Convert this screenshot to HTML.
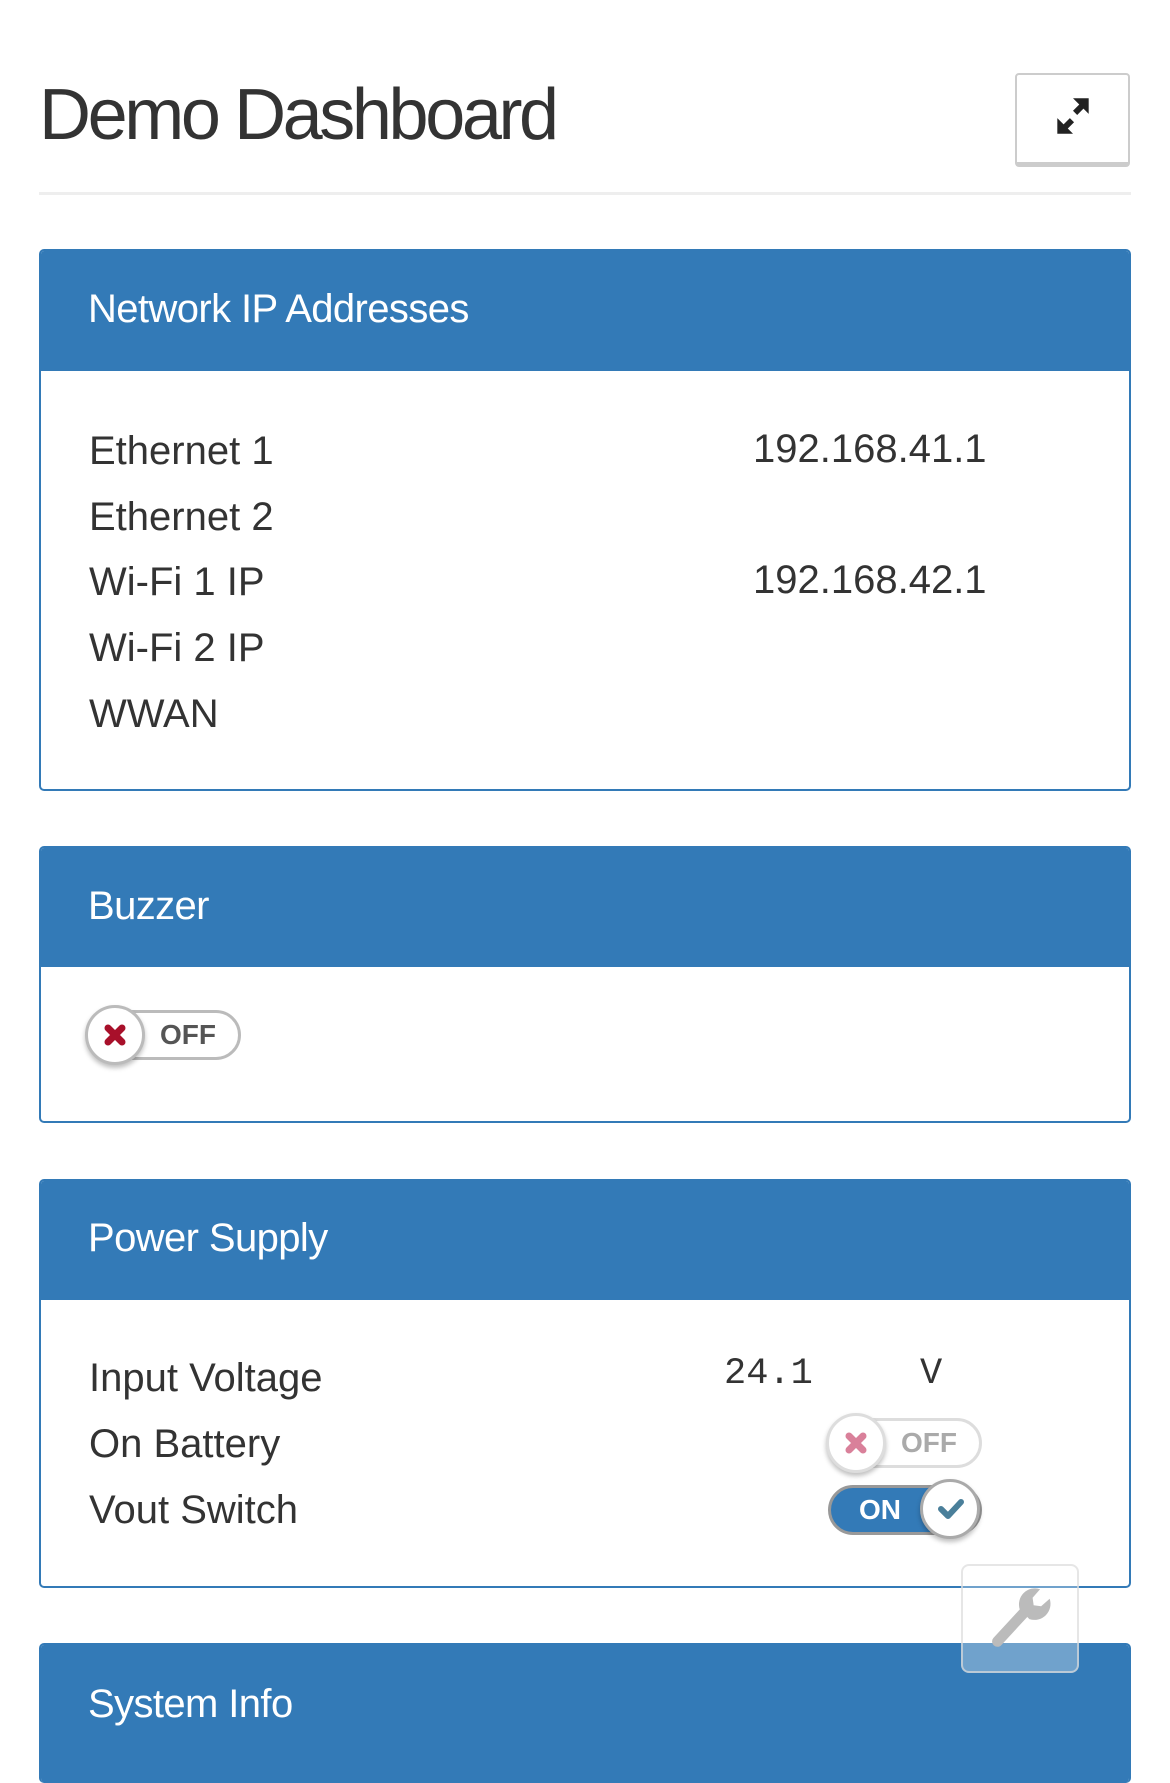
<!DOCTYPE html>
<html><head><meta charset="utf-8"><style>
*{box-sizing:border-box;margin:0;padding:0}
body{width:1170px;height:1764px;background:#fff;font-family:"Liberation Sans",Arial,sans-serif;color:#333;position:relative;overflow:hidden}
.abs{position:absolute}
.title{left:39px;top:70px;font-size:72px;letter-spacing:-3.4px;line-height:90px;color:#333}
.btn{left:1015px;top:73px;width:115px;height:94px;border:2px solid #ccc;border-bottom:5px solid #ccc;border-radius:4px;background:#fff}
.hr{left:39px;top:192px;width:1092px;height:3px;background:#eee}
.panel{position:absolute;left:39px;width:1092px;border:2px solid #337ab7;border-radius:5px;background:#fff;overflow:hidden}
.ph{background:#337ab7;color:#fff;font-size:40px;letter-spacing:-0.6px;padding-left:47px;position:absolute;left:0;right:0;top:0}
.lbl{position:absolute;left:48px;font-size:40px;line-height:46px;color:#333}
.val{position:absolute;font-size:40px;line-height:46px;color:#333}
.tog{position:absolute;width:154px;height:50px;border:3px solid #ccc;border-radius:27px;background:#fff}
.knob{position:absolute;width:60px;height:60px;border-radius:50%;background:#fff;border:3px solid #c8c8c8;box-shadow:0 3px 5px rgba(0,0,0,.25)}
.tt{position:absolute;font-weight:bold;font-size:28px;line-height:50px}
</style></head><body>
<div class="abs title">Demo Dashboard</div>
<div class="abs btn"><svg class="abs" style="left:33px;top:18px" width="46" height="46" viewBox="0 0 44 44"><g fill="#222"><path d="M22 5h15v15l-5-5-6 6-4-4 6-6z"/><path d="M7 24v15h15l-5-5 6-6-4-4-6 6z"/></g></svg></div>
<div class="abs hr"></div>

<div class="panel" style="top:249px;height:542px">
 <div class="ph" style="height:120px;line-height:116px">Network IP Addresses</div>
 <div class="lbl" style="top:177px">Ethernet 1</div>
 <div class="val" style="left:712px;top:175px">192.168.41.1</div>
 <div class="lbl" style="top:243px">Ethernet 2</div>
 <div class="lbl" style="top:308px">Wi-Fi 1 IP</div>
 <div class="val" style="left:712px;top:306px">192.168.42.1</div>
 <div class="lbl" style="top:374px">Wi-Fi 2 IP</div>
 <div class="lbl" style="top:440px">WWAN</div>
</div>

<div class="panel" style="top:846px;height:277px">
 <div class="ph" style="height:119px;line-height:116px">Buzzer</div>
 <div class="tog" style="left:46px;top:162px;border-color:#bbb"><div class="tt" style="left:70px;top:-3px;color:#555">OFF</div></div>
 <div class="knob" style="left:44px;top:157px;border-color:#bbb"><svg class="abs" style="left:15px;top:15px" width="24" height="24" viewBox="0 0 24 24"><path d="M5 5L19 19M19 5L5 19" stroke="#a8102a" stroke-width="7" stroke-linecap="round"/></svg></div>
</div>

<div class="panel" style="top:1179px;height:409px">
 <div class="ph" style="height:119px;line-height:114px">Power Supply</div>
 <div class="lbl" style="top:174px">Input Voltage</div>
 <div class="val" style="left:683px;top:170px;font-family:'Liberation Mono',monospace;font-size:37px">24.1</div>
 <div class="val" style="left:879px;top:170px;font-family:'Liberation Mono',monospace;font-size:37px">V</div>
 <div class="lbl" style="top:240px">On Battery</div>
 <div class="lbl" style="top:306px">Vout Switch</div>
 <div class="tog" style="left:787px;top:237px;border-color:#ddd"><div class="tt" style="left:70px;top:-3px;color:#aaa">OFF</div></div>
 <div class="knob" style="left:785px;top:232px;border-color:#ddd"><svg class="abs" style="left:15px;top:15px" width="24" height="24" viewBox="0 0 24 24"><path d="M5 5L19 19M19 5L5 19" stroke="#d9809a" stroke-width="7" stroke-linecap="round"/></svg></div>
 <div class="tog" style="left:787px;top:304px;background:#337ab7;border-color:#999"><div class="tt" style="left:28px;top:-3px;color:#fff">ON</div></div>
 <div class="knob" style="left:879px;top:298px;border-color:#aaa"><svg class="abs" style="left:14px;top:15px" width="28" height="24" viewBox="0 0 28 24"><path d="M4 12l7 7L24 5" stroke="#4a7f9a" stroke-width="6" fill="none" stroke-linecap="round" stroke-linejoin="round"/></svg></div>
</div>

<div class="panel" style="top:1643px;height:140px;border-bottom:none">
 <div class="ph" style="height:140px;line-height:118px">System Info</div>
</div>

<div class="abs" style="left:961px;top:1564px;width:118px;height:109px;border-radius:8px;background:rgba(255,255,255,0.3);border:2px solid rgba(220,220,220,0.7)">
 <svg class="abs" style="left:28px;top:20px" width="64" height="64" viewBox="0 0 60 60"><path d="M6 52L30 26" stroke="#bbb" stroke-width="10" stroke-linecap="round"/><path d="M27 22a15 15 0 0 1 19-19l-7 8 1 7 7 1 8-7a15 15 0 0 1-19 19z" fill="#bbb"/></svg>
</div>
</body></html>
